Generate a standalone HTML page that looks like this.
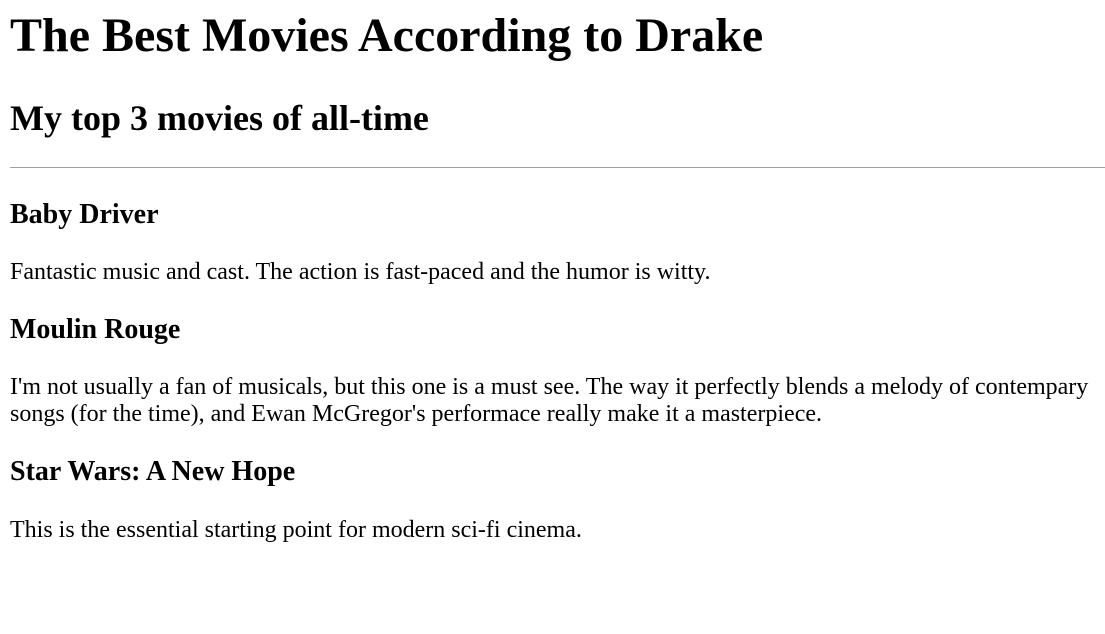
<!DOCTYPE html>
<html><head><meta charset="utf-8"><style>
html,body{margin:0;padding:0;background:#fff;width:1105px;height:634px;overflow:hidden}
body{font-family:"Liberation Serif","Times New Roman",serif;color:#000;position:relative}
.a{position:absolute;left:10px;white-space:nowrap;line-height:1}
h1,h2,h3,p{margin:0}
h1{font-size:48px;font-weight:bold}
h2{font-size:36px;font-weight:bold}
h3{font-size:28px;font-weight:bold}
p.a{font-size:24px;line-height:27px}
hr{position:absolute;left:10px;top:167px;width:1095px;margin:0;border:0;border-top:1px solid #a0a0a0;height:0}
</style></head><body>
<h1 class="a" style="top:12px">The Best Movies According to Drake</h1>
<h2 class="a" style="top:100px">My top 3 movies of all-time</h2>
<hr>
<h3 class="a" style="top:201px">Baby Driver</h3>
<p class="a" style="top:259px">Fantastic music and cast. The action is fast-paced and the humor is witty.</p>
<h3 class="a" style="top:316px">Moulin Rouge</h3>
<p class="a" style="top:374px">I'm not usually a fan of musicals, but this one is a must see. The way it perfectly blends a melody of contempary<br>songs (for the time), and Ewan McGregor's performace really make it a masterpiece.</p>
<h3 class="a" style="top:458px">Star Wars: A New Hope</h3>
<p class="a" style="top:517px">This is the essential starting point for modern sci-fi cinema.</p>
</body></html>
